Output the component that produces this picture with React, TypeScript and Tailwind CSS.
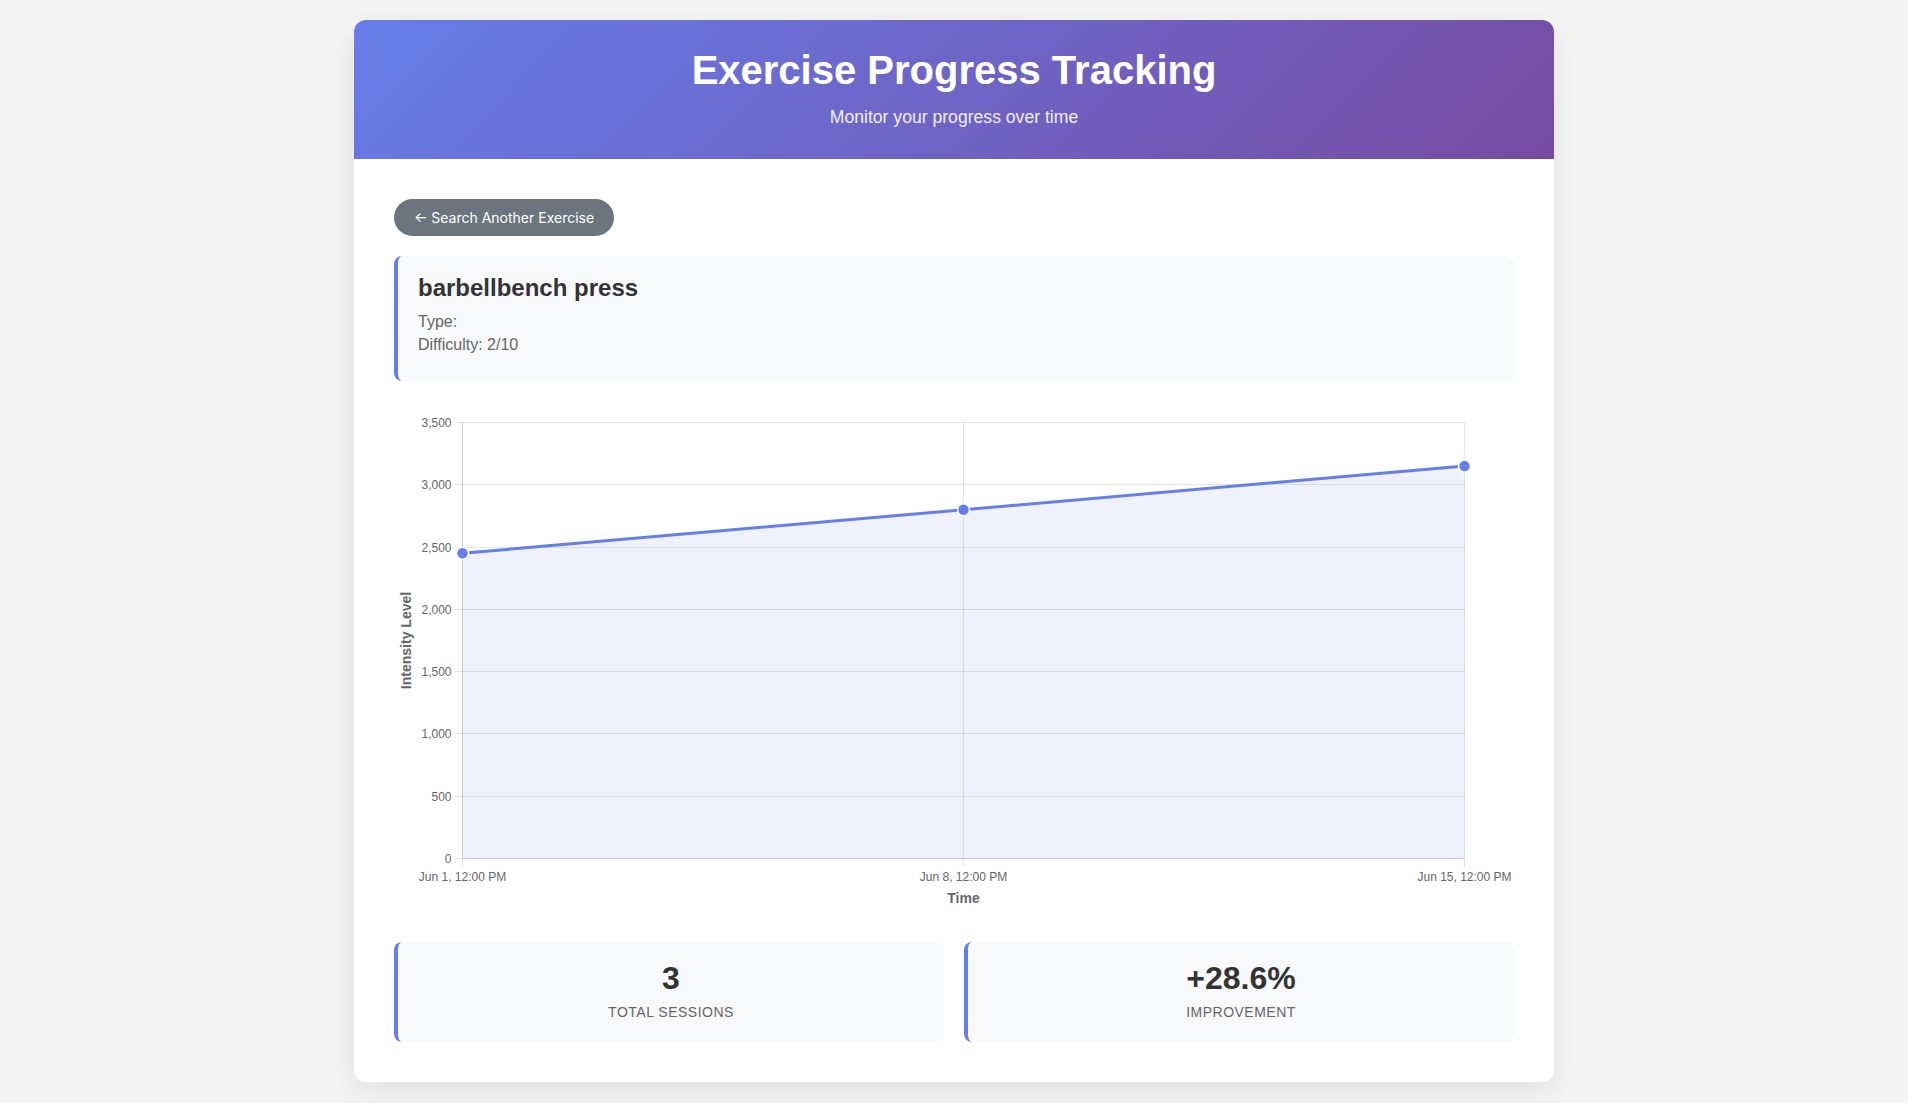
import React from 'react';

interface Session {
  label: string;
  value: number;
}

const sessions: Session[] = [
  { label: 'Jun 1, 12:00 PM', value: 2450 },
  { label: 'Jun 8, 12:00 PM', value: 2800 },
  { label: 'Jun 15, 12:00 PM', value: 3150 },
];

// plot area inside the 1120x500 svg
const LEFT = 68.5;
const RIGHT = 1070.5;
const TOP = 11.5;
const BOTTOM = 447.5;
const MAX = 3500;

const yFor = (v: number) => BOTTOM - (v / MAX) * (BOTTOM - TOP);
const xFor = (i: number) => LEFT + (i * (RIGHT - LEFT)) / (sessions.length - 1);

const ProgressChart: React.FC = () => {
  const ticks = [0, 500, 1000, 1500, 2000, 2500, 3000, 3500];
  const grid = 'rgba(0,0,0,0.1)';
  const pts = sessions.map((s, i) => ({ x: xFor(i), y: yFor(s.value) }));
  const line = pts.map((p) => `${p.x},${p.y}`).join(' ');
  const area = `${LEFT},${BOTTOM} ${line} ${RIGHT},${BOTTOM}`;

  return (
    <svg width={1120} height={500} viewBox="0 0 1120 500" className="block">
      {/* horizontal grid + tick marks */}
      {ticks.map((t) => {
        const y = Math.round(yFor(t) - 0.5) + 0.5;
        return (
          <g key={t}>
            <line x1={60.5} x2={RIGHT} y1={y} y2={y} stroke={grid} strokeWidth={1} />
            <text x={57.5} y={y} textAnchor="end" dominantBaseline="central" fontSize={12} fill="#666">
              {t.toLocaleString('en-US')}
            </text>
          </g>
        );
      })}

      {/* vertical grid + tick marks */}
      {sessions.map((s, i) => {
        const x = xFor(i);
        return (
          <g key={s.label}>
            <line x1={x} x2={x} y1={TOP} y2={BOTTOM + 8} stroke={grid} strokeWidth={1} />
            <text x={x} y={465.5} textAnchor="middle" dominantBaseline="central" fontSize={12} fill="#666">
              {s.label}
            </text>
          </g>
        );
      })}

      {/* axis borders */}
      <line x1={LEFT} x2={LEFT} y1={TOP} y2={BOTTOM} stroke={grid} strokeWidth={1} />
      <line x1={LEFT} x2={RIGHT} y1={BOTTOM} y2={BOTTOM} stroke={grid} strokeWidth={1} />

      <polygon points={area} fill="rgba(102,126,234,0.1)" />
      <polyline points={line} fill="none" stroke="#667eea" strokeWidth={3} strokeLinejoin="round" />
      {pts.map((p, i) => (
        <circle key={i} cx={p.x} cy={p.y} r={6} fill="#667eea" stroke="#fff" strokeWidth={1.5} />
      ))}

      <text x={569.5} y={487} textAnchor="middle" dominantBaseline="central" fontSize={14} fontWeight={700} fill="#666">
        Time
      </text>
      <text
        transform="translate(11.5 229.5) rotate(-90)"
        textAnchor="middle"
        dominantBaseline="central"
        fontSize={14}
        fontWeight={700}
        fill="#666"
      >
        Intensity Level
      </text>
    </svg>
  );
};

const StatCard: React.FC<{ value: string; label: string }> = ({ value, label }) => (
  <div className="bg-[#f8f9fa] rounded-[8px] border-l-4 border-[#667eea] pt-5 pb-[22px] text-center">
    <div className="text-[32px] leading-[32px] font-bold text-[#333] mb-[10px]">{value}</div>
    <div className="text-[14px] leading-[16px] tracking-[0.5px] uppercase text-[#666]">{label}</div>
  </div>
);

export default function App() {
  const first = sessions[0].value;
  const last = sessions[sessions.length - 1].value;
  const improvement = (((last - first) / first) * 100).toFixed(1);

  return (
    <div className="min-h-screen bg-[#f4f4f5] pt-5 pb-5 font-['Liberation_Sans',Arial,sans-serif]">
      <div className="max-w-[1200px] mx-auto bg-white rounded-[12px] shadow-[0_10px_30px_rgba(0,0,0,0.08)] overflow-hidden">
        <header className="bg-[linear-gradient(135deg,#667eea_0%,#764ba2_100%)] text-white text-center pt-[27px] pb-[32px]">
          <h1 className="text-[40px] leading-[46px] font-bold mb-[14px]">Exercise Progress Tracking</h1>
          <p className="text-[17.6px] leading-[20px] opacity-90">Monitor your progress over time</p>
        </header>

        <div className="p-10">
          <button className="rounded-full bg-[#6c757d] text-white font-['Inter',sans-serif] text-[14px] leading-[17px] px-5 py-[10px] mb-5">
            ← Search Another Exercise
          </button>

          <div className="bg-[#f8f9fa] rounded-[8px] border-l-4 border-[#667eea] px-5 pt-5 pb-[26px]">
            <h2 className="text-[24px] leading-[24px] font-bold text-[#333] mb-[13px]">barbellbench press</h2>
            <p className="text-[16px] leading-[18.4px] text-[#666] mb-[5px]">Type: </p>
            <p className="text-[16px] leading-[18.4px] text-[#666]">Difficulty: 2/10</p>
          </div>

          <div className="mt-[30px] mb-[31px]">
            <ProgressChart />
          </div>

          <div className="grid grid-cols-2 gap-5">
            <StatCard value={String(sessions.length)} label="Total Sessions" />
            <StatCard value={`+${improvement}%`} label="Improvement" />
          </div>
        </div>
      </div>
    </div>
  );
}
